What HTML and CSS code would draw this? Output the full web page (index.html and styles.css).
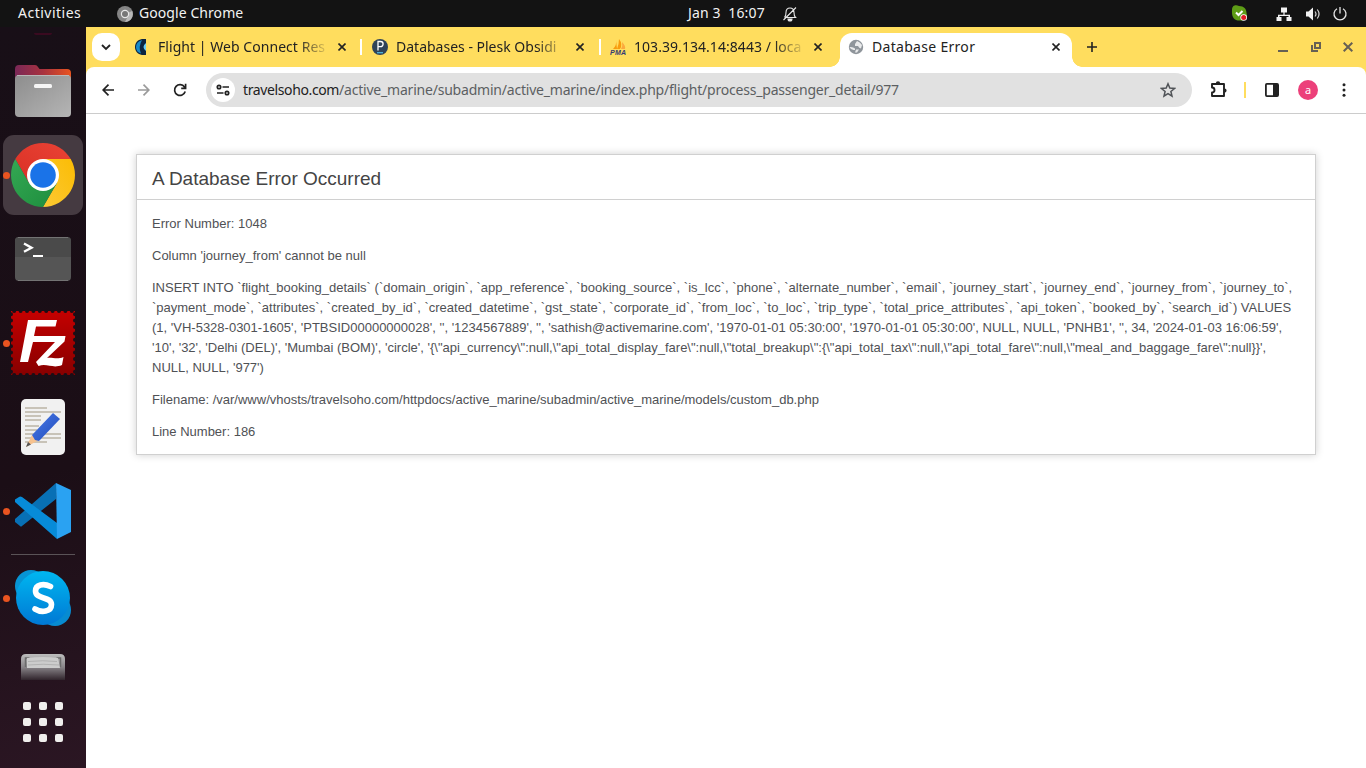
FILE: index.html
```html
<!DOCTYPE html>
<html lang="en">
<head>
<meta charset="utf-8">
<title>Database Error</title>
<link rel="stylesheet" href="styles.css">
</head>
<body>
<header class="topbar">
  <span class="activities">Activities</span>
  <svg class="app-icon" width="16" height="16" viewBox="0 0 16 16"><circle cx="8" cy="8" r="8" fill="#858585"/><path d="M8 8 15.2 5A8 8 0 0 1 8 16l3-6z" fill="#b8b8b8"/><circle cx="8" cy="8" r="4.2" fill="#e8e8e8"/><circle cx="8" cy="8" r="3" fill="#777"/></svg>
  <span class="app-name">Google Chrome</span>
  <span class="clock">Jan 3&nbsp; 16:07</span>
  <svg class="bell" width="16" height="16" viewBox="0 0 16 16" fill="none" stroke="#e8e8e8" stroke-width="1.1"><path d="M3 11.5h10.5c-1.500-1.300-1.500-2.500-1.500-5C12 3.500 10.500 2 8 2S4 3.500 4 6.500c0 2.500 0 3.700-1.500 5M14 1.500 1.500 14"/><path d="M6 13h4a2 2 0 0 1-4 0z" fill="#fff"/></svg>
  <div class="tray">
    <svg width="17" height="17" viewBox="0 0 17 17"><path d="M1 5C1 0 5-.3 8 1c5 0 7.500 3 7.500 7 1.500 4-1 8-6 7.500C3 16 .5 12 1 5z" fill="#5d9c16"/><path d="m5 7.500 2.500 2.500 4-4" stroke="#fff" stroke-width="2" fill="none"/><circle cx="12.700" cy="12.500" r="3.300" fill="#fff"/><circle cx="12.700" cy="12.500" r="2.500" fill="#e01b24"/></svg>
    <svg class="net" width="16" height="16" viewBox="0 0 16 16" fill="#f2f2f2"><path d="M5 1.500h6v5H8.600v2.300H14V11h1.500v4h-5v-4h2v-1h-9v1h2v4h-5v-4H2V8.800h5.400V6.500H5z"/></svg>
    <svg class="sound" width="16" height="16" viewBox="0 0 16 16"><path d="M1 5.500h2.500L8 1.500v13l-4.500-4H1z" fill="#f2f2f2"/><path d="M10 5.500q2 2.500 0 5M12.300 3.500q3.500 4.500 0 9" stroke="#d5d5d5" stroke-width="1.200" fill="none"/></svg>
    <svg class="power" width="16" height="16" viewBox="0 0 16 16" fill="none" stroke="#e6e6e6" stroke-width="1.300"><path d="M5 2.700a6 6 0 1 0 6 0M8 1v6.500"/></svg>
  </div>
</header>
<div class="desktop">
  <nav class="dock">
    <div class="dock-item"><i class="peek"></i><svg width="56" height="56" viewBox="0 0 56 56"><defs><linearGradient id="fo" x1="0" x2="1"><stop offset="0" stop-color="#7a2857"/><stop offset=".5" stop-color="#a8323f"/><stop offset="1" stop-color="#e95420"/></linearGradient><linearGradient id="fg" x1="0" y1="0" x2="1" y2="1"><stop stop-color="#8d8d8d"/><stop offset="1" stop-color="#b5b5b5"/></linearGradient></defs><path d="M0 6q0-4 4-4h16q2 0 3 2l1.500 2H52q4 0 4 4v16H0z" fill="url(#fo)"/><rect y="12" width="56" height="42" rx="4" fill="url(#fg)"/><path d="M2 12.500h52" stroke="#c2c2c2" stroke-width=".8"/><rect x="19" y="21" width="18" height="4" rx="1.500" fill="#f5f5f5"/></svg></div>
    <div class="dock-item selected"><i class="running"></i><svg width="64" height="64" viewBox="0 0 64 64"><defs><linearGradient id="cr" x1="0" y1="1" x2="1" y2="0"><stop stop-color="#d93025"/><stop offset="1" stop-color="#ea4335"/></linearGradient><linearGradient id="cy" x1="0" y1="1" x2="1" y2="0"><stop stop-color="#fcc934"/><stop offset="1" stop-color="#fbbc04"/></linearGradient><linearGradient id="cg" x1="1" y1="1" x2="0" y2="0"><stop stop-color="#1e8e3e"/><stop offset="1" stop-color="#34a853"/></linearGradient></defs><path d="M4.300 16A32 32 0 0 1 59.700 16H32L18 40z" fill="url(#cr)"/><path d="M59.700 16A32 32 0 0 1 32 64L45.900 40 32 16z" fill="url(#cy)"/><path d="M4.300 16A32 32 0 0 0 32 64L45.900 40H18z" fill="url(#cg)"/><circle cx="32" cy="32" r="16" fill="#fff"/><circle cx="32" cy="32" r="12.800" fill="#1a73e8"/></svg></div>
    <div class="dock-item"><svg width="56" height="44" viewBox="0 0 56 44"><rect width="56" height="44" rx="4" fill="#555"/><path d="M4 0h48q4 0 4 4v16H0V4q0-4 4-4z" fill="#4a4a4a"/><path d="M3 .5h50M3 43.500h50" stroke="#737373" stroke-width="1"/><path d="m9 6.500 7.500 4.200L9 14.800" stroke="#fff" stroke-width="2.400" fill="none"/><path d="M18 19h10" stroke="#fff" stroke-width="2"/></svg></div>
    <div class="dock-item"><i class="running"></i><svg width="64" height="64" viewBox="0 0 64 64"><defs><linearGradient id="fz" x2="0" y2="1"><stop stop-color="#c40000"/><stop offset="1" stop-color="#870000"/></linearGradient></defs><rect width="64" height="64" fill="url(#fz)"/><rect width="64" height="64" fill="none" stroke="#1a0e16" stroke-width="4" stroke-linecap="round" stroke-dasharray="0 6.400" stroke-dashoffset="-3.200"/><path d="M17 9h29l-1.500 6.500H25L23 25h31.500l-1 5.500L36 47c5-1 10 2 16.500-1L51 54c-9 4-15-2-23.500 1L25 51l19-20H22l-5 20H9z" fill="#fff"/></svg></div>
    <div class="dock-item"><svg width="44" height="56" viewBox="0 0 44 56"><defs><linearGradient id="pe" x1="0" y1="0" x2="1" y2="1"><stop stop-color="#4a7be8"/><stop offset="1" stop-color="#204bbb"/></linearGradient></defs><rect width="44" height="56" rx="5" fill="#f1f1f1"/><path d="M4 9h22M4 13h36M4 17h16M4 21h16M4 27h14M4 31h12M4 35h36M4 39h36M4 43h22" stroke="#c8c3b8" stroke-width="2"/><path d="m11 36-6 12 13-7z" fill="#f6c28f"/><path d="m7 43-2 5 5-2.500z" fill="#555"/><path d="M11 36 32 14l7 6-21 22-4-1z" fill="url(#pe)"/></svg></div>
    <div class="dock-item"><i class="running"></i><svg width="56" height="56" viewBox="0 0 56 56"><path d="M41 0v16L7 43q-1 1-2 0l-5-4v-3z" fill="#0870b5"/><path d="M0 16.500 4 14q1-1 3 0l35 26v16L0 19z" fill="#078bd8"/><path d="m41 0 15 7v42l-14 7z" fill="#2aa2f2"/></svg></div>
    <hr class="dock-line">
    <div class="dock-item"><i class="running"></i><svg width="56" height="56" viewBox="0 0 56 56"><defs><linearGradient id="sk" x2="0" y2="1"><stop stop-color="#00b7f0"/><stop offset="1" stop-color="#0078d4"/></linearGradient></defs><circle cx="16" cy="16" r="16" fill="#0794d4"/><circle cx="40" cy="40" r="16" fill="#078bd1"/><circle cx="28" cy="28" r="27" fill="url(#sk)"/><path d="M35.500 16.500c-7-3.500-15-2-15 4.500 0 9 16 5 16 13.500 0 7.500-10 8.500-16.500 4.500" stroke="#fff" stroke-width="5.600" stroke-linecap="round" fill="none"/></svg></div>
    <div class="disk"><svg width="44" height="26" viewBox="0 0 44 26"><defs><linearGradient id="di" x2="0" y2="1"><stop stop-color="#bdbdbd"/><stop offset=".5" stop-color="#898589"/><stop offset="1" stop-color="#30242c"/></linearGradient></defs><path d="M0 26V5q0-5 5-5h34q5 0 5 5v21z" fill="url(#di)"/><path d="M4.500 13V4h4M39.500 13V4h-4" stroke="#6b6b6b" stroke-width="1.500" fill="none"/><path d="M6 4q16-2 31 0l2 10H6z" fill="#ccc"/><path d="M7 7.500q15-1.500 29 0M7 11q15-1.500 31 0" stroke="#aaa" stroke-width=".8" fill="none"/></svg></div>
    <svg class="apps" width="40" height="40" viewBox="0 0 40 40" fill="#f0efed"><rect width="8" height="8" rx="2"/><rect x="16" width="8" height="8" rx="2"/><rect x="32" width="8" height="8" rx="2"/><rect y="16" width="8" height="8" rx="2"/><rect x="16" y="16" width="8" height="8" rx="2"/><rect x="32" y="16" width="8" height="8" rx="2"/><rect y="32" width="8" height="8" rx="2"/><rect x="16" y="32" width="8" height="8" rx="2"/><rect x="32" y="32" width="8" height="8" rx="2"/></svg>
  </nav>
  <div class="browser">
    <div class="tabstrip">
      <span class="tab-search"><svg width="10" height="10" viewBox="0 0 10 10" fill="none" stroke="#222" stroke-width="1.800"><path d="m1 3 4 4 4-4"/></svg></span>
      <div class="tab first">
        <svg class="favicon" width="16" height="16" viewBox="0 0 16 16"><path d="M12 0C5-1 1 3 1 8s4 9 11 8z" fill="#0b2440"/><path d="M8 1Q2 3 2 8q0 5 5 6.500Q4 8 8 1z" fill="#168ac9"/><path d="M12 4q-5 4 0 8z" fill="#68cdf5"/></svg>
        <span class="tab-title t1">Flight | Web Connect Res</span>
        <svg class="close" width="8" height="8" viewBox="0 0 8 8"><path d="m.5.5 7 7m0-7-7 7"/></svg>
      </div>
      <i class="divider"></i>
      <div class="tab second">
        <svg class="favicon" width="16" height="16" viewBox="0 0 16 16"><circle cx="8" cy="8" r="8" fill="#2f4358"/><path d="M6 11.500v-9h2.500a2.500 2.500 0 0 1 0 5.200H6" fill="none" stroke="#fff" stroke-width="1.300"/><path d="M5 13.700h6" stroke="#53bce6" stroke-width="1.200"/></svg>
        <span class="tab-title t2">Databases - Plesk Obsidi</span>
        <svg class="close" width="8" height="8" viewBox="0 0 8 8"><path d="m.5.5 7 7m0-7-7 7"/></svg>
      </div>
      <i class="divider"></i>
      <div class="tab third">
        <svg class="favicon" width="16" height="16" viewBox="0 0 16 16"><path d="M6 1q1 5-3 9h4zM9 0q4 5 1 10H7q2-5 2-10z" fill="#f89c0e"/><path d="M12 3q4 4 3 7h-4q2-3 1-7z" fill="#fba83e"/><text x="0" y="15.500" class="pma" textLength="16">PMA</text></svg>
        <span class="tab-title t3">103.39.134.14:8443 / loca</span>
        <svg class="close" width="8" height="8" viewBox="0 0 8 8"><path d="m.5.5 7 7m0-7-7 7"/></svg>
      </div>
      <div class="tab active">
        <svg class="favicon globe" width="16" height="16" viewBox="0 0 16 16"><circle cx="8" cy="8" r="7.200" fill="#8f959b"/><path d="M1.500 8q3.500-.5 5.500 1.500V11H5.500q-3-.5-4-3zM9 2 7 5v2h3q1 2 3 2.500L14 6q-2-3-5-4zM8 10.500h3l-2 3H7z" fill="#fff" opacity=".8"/></svg>
        <span class="tab-title t4">Database Error</span>
        <svg class="close" width="8" height="8" viewBox="0 0 8 8"><path d="m.5.5 7 7m0-7-7 7"/></svg>
      </div>
      <svg class="new-tab" width="10" height="10" viewBox="0 0 10 10"><path d="M0 5h10M5 0v10" stroke="#222" stroke-width="1.600"/></svg>
      <div class="window-buttons">
        <svg width="10" height="10" viewBox="0 0 10 10"><path d="M0 9h10"/></svg>
        <svg width="10" height="10" viewBox="0 0 10 10"><path d="M4 1h5v5H4zM1 3v6h6"/></svg>
        <svg width="10" height="10" viewBox="0 0 10 10"><path d="m.7.7 8.600 8.600M9.300.7.7 9.300"/></svg>
      </div>
    </div>
    <div class="toolbar">
      <svg class="nav" width="12" height="12" viewBox="0 0 12 12"><path d="M6.500.7 1.200 6l5.300 5.300M1.200 6H12"/></svg>
      <svg class="nav forward" width="12" height="12" viewBox="0 0 12 12"><path d="M5.500.7 10.800 6l-5.300 5.300M10.800 6H0"/></svg>
      <svg class="nav reload" width="14" height="14" viewBox="0 0 14 14"><path d="M12.200 8.500A5.400 5.400 0 1 1 11.500 4L12.500 5M12.600.8V5.300H8.200"/></svg>
      <div class="omnibox">
        <span class="site-info"><svg width="14" height="12" viewBox="0 0 14 12" fill="none" stroke="#222" stroke-width="1.700"><circle cx="3" cy="3" r="1.700"/><circle cx="11" cy="9" r="1.700"/><path d="M6.500 3H13M1 9h6.500"/></svg></span>
        <span class="url"><span class="host">travelsoho.com</span><span class="path">/active_marine/subadmin/active_marine/index.php/flight/process_passenger_detail/977</span></span>
        <svg class="star" width="16" height="16" viewBox="0 0 16 16" fill="none" stroke="#505357" stroke-width="1.500"><path d="m8 1.800 1.800 4.300 4.700.4-3.600 3 1.100 4.600-4-2.500-4 2.500 1.100-4.600-3.600-3 4.700-.4z"/></svg>
      </div>
      <svg class="puzzle" width="18" height="18" viewBox="0 0 18 18"><path d="M2 3h12v12H2v-3.500q2.500 0 2.500-2.500T2 6.500z" fill="none" stroke="#222" stroke-width="1.900" stroke-linejoin="round"/><path d="M5.800 2.500a2 2 0 0 1 4.400 0zM14.500 7.500a2 2 0 0 1 0 4.200z" fill="#222"/></svg>
      <i class="tool-divider"></i>
      <svg class="panel" width="14" height="14" viewBox="0 0 14 14"><rect x=".9" y=".9" width="12.200" height="12.200" rx="1" fill="none" stroke="#222" stroke-width="1.800"/><path d="M8 1h5v12H8z" fill="#222"/></svg>
      <span class="avatar">a</span>
      <svg class="dots" width="4" height="14" viewBox="0 0 4 14" fill="#222"><circle cx="2" cy="1.700" r="1.500"/><circle cx="2" cy="7" r="1.500"/><circle cx="2" cy="12.300" r="1.500"/></svg>
    </div>
    <main class="page">
      <section class="error">
        <h1>A Database Error Occurred</h1>
        <p>Error Number: 1048</p>
        <p>Column 'journey_from' cannot be null</p>
        <p>INSERT INTO `flight_booking_details` (`domain_origin`, `app_reference`, `booking_source`, `is_lcc`, `phone`, `alternate_number`, `email`, `journey_start`, `journey_end`, `journey_from`, `journey_to`, `payment_mode`, `attributes`, `created_by_id`, `created_datetime`, `gst_state`, `corporate_id`, `from_loc`, `to_loc`, `trip_type`, `total_price_attributes`, `api_token`, `booked_by`, `search_id`) VALUES (1, 'VH-5328-0301-1605', 'PTBSID00000000028', '', '1234567889', '', 'sathish@activemarine.com', '1970-01-01 05:30:00', '1970-01-01 05:30:00', NULL, NULL, 'PNHB1', '', 34, '2024-01-03 16:06:59', '10', '32', 'Delhi (DEL)', 'Mumbai (BOM)', 'circle', '{\"api_currency\":null,\"api_total_display_fare\":null,\"total_breakup\":{\"api_total_tax\":null,\"api_total_fare\":null,\"meal_and_baggage_fare\":null}}', NULL, NULL, '977')</p>
        <p>Filename: /var/www/vhosts/travelsoho.com/httpdocs/active_marine/subadmin/active_marine/models/custom_db.php</p>
        <p>Line Number: 186</p>
      </section>
    </main>
  </div>
</div>
</body>
</html>
```
FILE: styles.css
```css
* { box-sizing: border-box; }
body { margin: 0; width: 1366px; height: 768px; overflow: hidden; display: flex; flex-direction: column; font: 14px/20px "Noto Sans", sans-serif; }
svg { display: block; flex: none; }
.topbar { flex: none; height: 27px; background: #131313; color: #f2f2f2; display: flex; align-items: center; padding: 0 18px 0; white-space: nowrap; }
.topbar span { padding-bottom: 1px; }
.activities { width: 99px; letter-spacing: .5px; }
.app-name { margin-left: 6px; width: 549px; letter-spacing: .07px; }
.clock { width: 94px; letter-spacing: .15px; }
.tray { margin-left: auto; display: flex; align-items: center; }
.net { margin-left: 28px; }
.sound { margin-left: 13px; }
.power { margin-left: 11px; }
.desktop { flex: 1; display: flex; min-height: 0; }
.dock { width: 86px; flex: none; background: linear-gradient(165deg, #180f17 0%, #1b0e16 60%, #2b1623 100%); display: flex; flex-direction: column; align-items: center; gap: 4px; padding-top: 24px; }
.dock-item { position: relative; flex: none; width: 80px; height: 80px; border-radius: 11px; display: flex; align-items: center; justify-content: center; }
.selected { background: #453a41; }
.running { position: absolute; left: 0; top: 36.5px; width: 7px; height: 7px; border-radius: 50%; background: #e95420; }
.peek { position: absolute; left: 31px; top: -18px; width: 18px; height: 2px; border-radius: 0 0 9px 9px; background: #3a0a20; }
.dock-line { width: 64px; height: 1px; flex: none; border: 0; margin: -1px 0; background: #5a5357; }
.disk { margin-top: 12px; }
.apps { margin-top: 18px; }
.browser { flex: 1; min-width: 0; display: flex; flex-direction: column; background: #ffdd5e; color: #222; }
.tabstrip { flex: none; height: 40px; display: flex; align-items: center; padding: 0 13px 0 6px; }
.tab-search { width: 28px; height: 28px; border-radius: 10px; background: #fff; display: flex; align-items: center; justify-content: center; }
.tab { flex: none; width: 237px; height: 34px; display: flex; align-items: center; padding: 0 14px 0 10px; }
.tab.first { width: 240px; padding-left: 14px; }
.tab.second { padding-right: 15px; }
.tab.third { width: 239px; padding: 0 18px 0 9px; }
.tab.active { position: relative; width: 232px; margin-top: 6px; padding: 0 12px 6px 8px; background: #fff; border-radius: 12px 12px 0 0; }
.active::before, .active::after { content: ""; position: absolute; bottom: 0; width: 10px; height: 10px; background: radial-gradient(circle at 0 0, transparent 9.5px, #fff 10px); left: -10px; }
.active::after { left: auto; right: -10px; background: radial-gradient(circle at 100% 0, transparent 9.5px, #fff 10px); }
.tab-title { margin-left: 8px; width: 168px; white-space: nowrap; -webkit-mask-image: linear-gradient(to right, #000 140px, transparent 172px); }
.active .tab-title { -webkit-mask-image: none; }
.t1 { letter-spacing: .05px; }
.t3 { letter-spacing: .05px; }
.t4 { letter-spacing: .3px; }
.close { margin-left: auto; stroke: #222; stroke-width: 1.6; }
.divider { width: 2px; height: 16px; background: #fff; flex: none; }
.pma { font: italic bold 7px "Liberation Sans", sans-serif; fill: #333a75; }
.new-tab { margin-left: 15px; }
.window-buttons { margin-left: auto; display: flex; gap: 22.5px; fill: none; stroke: #666054; stroke-width: 2; }
.toolbar { flex: none; height: 47px; background: #fff; border-bottom: 1px solid #ccc; border-radius: 8px 8px 0 0; display: flex; align-items: center; padding: 0 20px 0 16px; }
.nav { fill: none; stroke: #222; stroke-width: 1.7; }
.forward { margin-left: 24px; stroke: #9b9b9b; }
.reload { margin-left: 23px; }
.omnibox { margin-left: 19px; width: 986px; height: 34px; border-radius: 17px; background: #e1e1e1; display: flex; align-items: center; padding: 0 16px 0 5px; }
.site-info { width: 24px; height: 24px; border-radius: 50%; background: #fff; display: flex; align-items: center; justify-content: center; }
.url { margin-left: 8px; white-space: nowrap; color: #5c5f62; }
.host { color: #222; letter-spacing: -.38px; }
.path { letter-spacing: -.21px; }
.star { margin-left: auto; }
.puzzle { margin-left: 18px; }
.tool-divider { margin-left: 16px; width: 2px; height: 16px; background: #ffdd5e; }
.panel { margin-left: 19px; }
.avatar { margin-left: 19px; width: 20px; height: 20px; border-radius: 50%; background: #ec407a; color: #fff; text-align: center; font-size: 11px; line-height: 19px; }
.dots { margin-left: auto; }
.page { flex: 1; background: #fff; padding: 40px 50px; font: 13px/20px Helvetica, "Liberation Sans", Arial, sans-serif; color: #4f5155; }
.error { border: 1px solid #d0d0d0; box-shadow: 0 0 8px #d0d0d0; }
.error h1 { color: #444; border-bottom: 1px solid #d0d0d0; font-size: 19px; line-height: 20px; font-weight: normal; margin: 0 0 14px; padding: 14px 15px 10px; }
.error p { margin: 12px 15px; }
```
